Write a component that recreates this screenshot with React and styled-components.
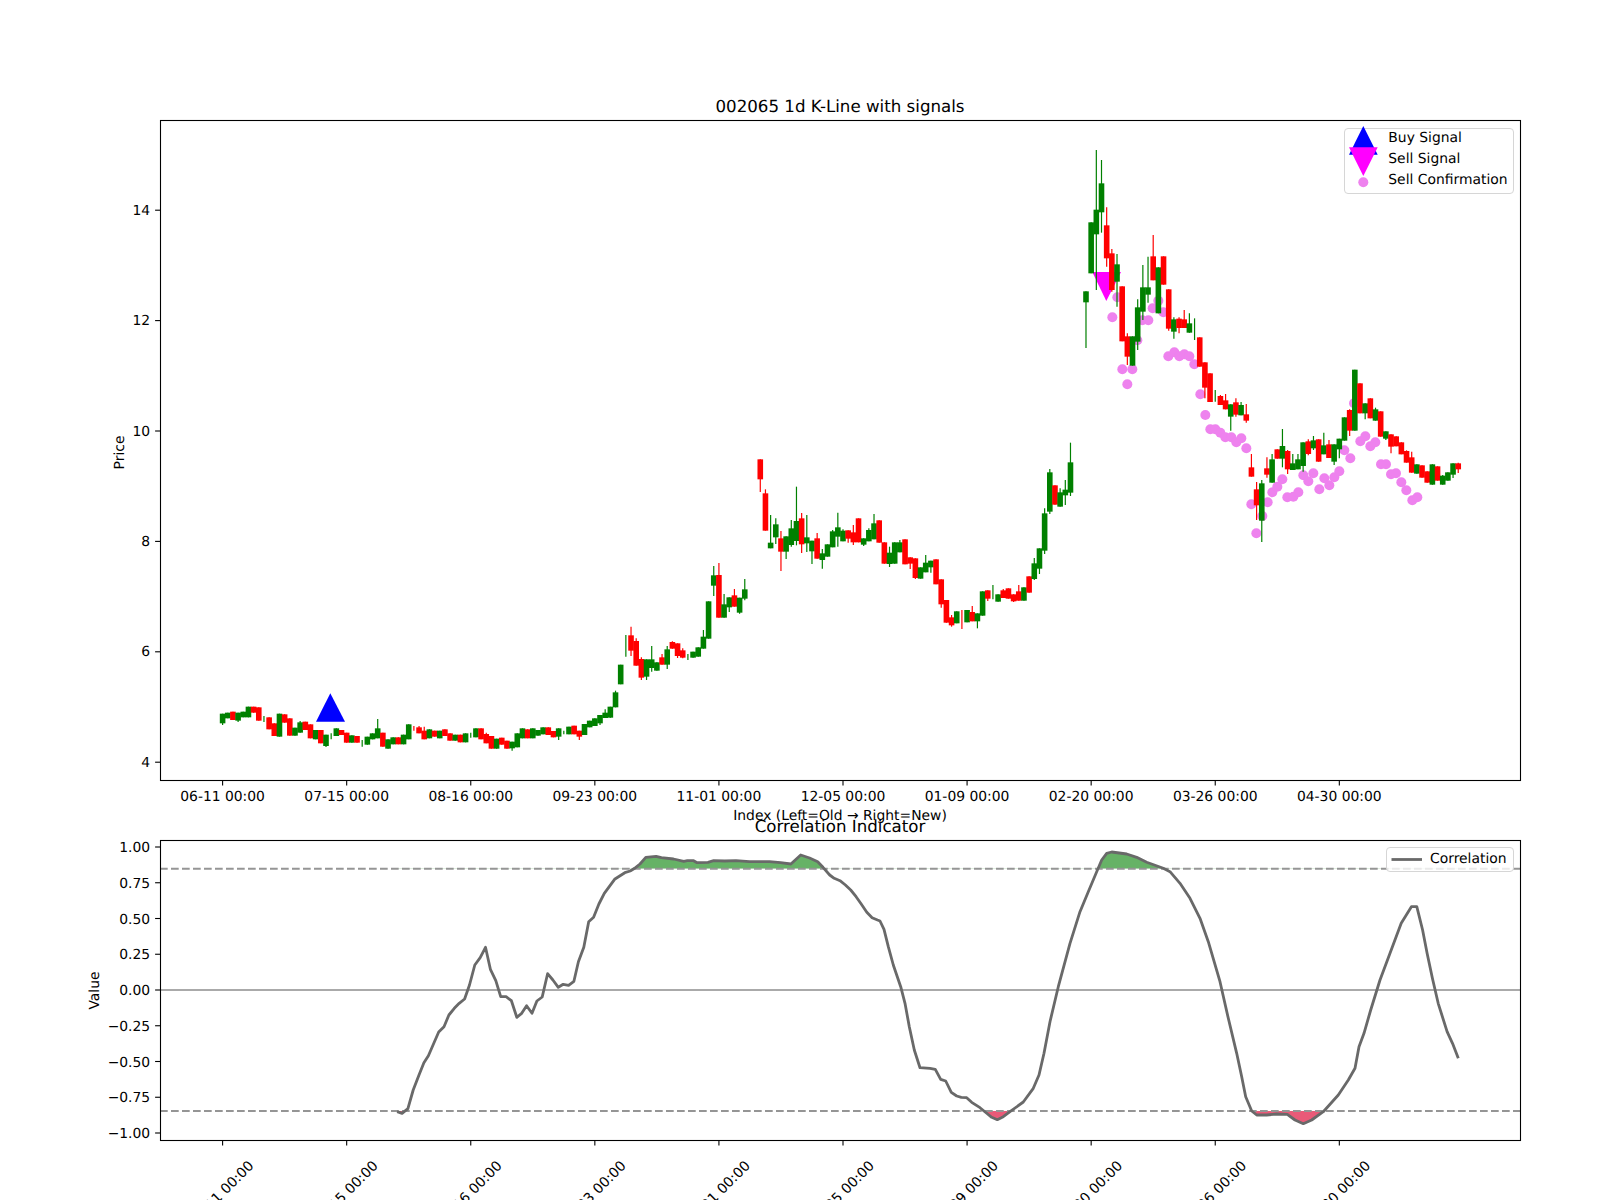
import styled, { createGlobalStyle } from 'styled-components';

const GlobalStyle = createGlobalStyle`
  html, body {
    margin: 0;
    background: #fff;
  }
`;

const Figure = styled.div`
  width: 1600px;
  height: 1200px;
  overflow: hidden;
  background: #fff;
  font-family: "DejaVu Sans", sans-serif;
  font-size: 13.89px;
  color: #000;
  text-rendering: geometricPrecision;
`;

const Panel = styled.section`
  position: relative;
  height: ${props => props.$height}px;
`;

const Plot = styled.svg`
  display: block;
  width: 1600px;
  height: ${props => props.$height}px;
  overflow: visible;

  text {
    font-family: "DejaVu Sans", sans-serif;
    font-size: 13.89px;
    fill: #000;
  }
  text.title {
    font-size: 16.67px;
  }
`;

const Legend = styled.div`
  position: absolute;
  right: 86.3px;
  top: ${props => props.$top}px;
  box-sizing: border-box;
  width: ${props => props.$width}px;
  height: ${props => props.$legendHeight}px;
  padding-left: 4px;
  background: rgba(255, 255, 255, 0.8);
  border: 1px solid #d6d6d6;
  border-radius: 4px;
  display: flex;
  flex-direction: column;
  justify-content: ${props => props.$center ? 'center' : 'flex-start'};
`;

const LegendRow = styled.div`
  display: flex;
  align-items: center;
  gap: 10px;
  height: 21px;
  line-height: 21px;
  white-space: nowrap;

  &:first-child {
    margin-top: -0.5px;
  }
`;

const LegendKey = styled.svg`
  flex: none;
  width: 29px;
  height: 21px;
  overflow: visible;
`;

const BLUE = '#0000ff';
const MAGENTA = '#ff00ff';
const VIOLET = '#ee82ee';
const GREEN = '#008000';
const RED = '#ff0000';

// candles: [colour, body top, body bottom, wick top, wick bottom], traced per chart section
const section1 = [
  ['g',341,370,341,375],['g',338,355],['r',335,360],['g',338,362,338,366],['g',335,352],['g',320,352],['r',320,338],['r',322,362],
  ['g',357,357,348,366],['r',352,388],['r',370,408],['g',341,410],['r',343,368],['r',355,407],['g',383,407],['g',367,398,363,398],
  ['r',365,390],['r',373,415],['g',390,418],['r',390,430],['g',404,438,404,441],['g',409,409,400,418],['g',385,408],['r',390,405],
  ['r',398,428],['g',406,428],['r',408,428],['g',430,430,420,440],['g',410,434],['g',400,418],['g',385,415,357,415],['r',398,440],
  ['g',418,446],['g',412,433],['r',412,433],['g',404,433],['g',373,418],['r',385,385,378,392],['r',382,400,378,400],['r',392,418,380,418],
  ['g',388,415],['r',392,410],['g',392,415],['r',388,408],['r',400,422],['g',404,422],['r',404,427],['g',400,427],
  ['g',405,405,398,413],['g',385,412],['r',385,418],['r',402,430,398,430],['r',408,446],['g',416,446],['r',413,434],['r',422,446],
  ['g',425,445,425,452],['g',400,442],['g',385,415],['r',388,415],['g',385,415],['g',390,407],['g',382,403],['r',382,405],
  ['r',393,412],['g',385,410,385,420],['g',397,397,392,403],['g',380,403],['r',377,403],['r',392,410,392,420],['g',372,405],['g',362,382],
  ['g',355,378],['g',345,370,345,375],['g',338,354,328,354],['g',320,353],['g',277,322,272,322],['g',194,253],
];

const section2 = [
  ['g',617,617,585,650],['r',586,632,560,648],['r',603,677,595,677],['r',657,713,652,720],['g',658,710,658,720],['g',658,684,618,695],['g',667,692],['r',652,674,642,674],
  ['g',628,674,618,687],['r',606,626,604,626],['r',610,648,610,654],['r',631,653,625,655],['g',651,651,642,660],['g',635,653],['g',622,650],['g',590,626,570,626],
  ['g',484,596],['g',406,437,378,468],['r',405,533,369,533],['g',493,533,462,533],['g',472,502,472,516],['r',466,500,447,500],['g',473,518,473,521],['g',448,476,417,481],
  null,null,
  ['r',58,118,58,156],['r',160,272,148,272],['g',308,325,225,325],['g',253,292,235,312],['r',295,335,273,393],['g',289,335,289,357],
  ['g',265,315,240,320],['g',243,303,140,316],['r',235,313,219,339],['g',292,310,225,336],['g',302,334,302,372],['r',295,356,279,356],['g',340,360,327,386],['g',313,350],
  ['g',274,322,270,322],['g',262,290,218,320],['g',272,304,268,304],['r',271,296,271,308],['r',277,307,255,315],['r',235,307],['g',295,314,295,318],['g',270,304,265,304],
  ['g',250,298,222,298],['r',241,308],['r',307,371],['g',338,372,320,381],['g',307,371],['g',307,337,300,337],['r',298,373],['r',352,371,352,387],
  ['r',355,414,355,417],['g',382,416],['g',368,397,345,397],['g',362,382,362,398],['r',358,433],['r',418,493,418,503],['r',480,548],['r',532,556,525,560],
  ['g',514,550],['r',538,538,510,567],['g',510,547],['r',516,544,498,544],['g',520,544,520,565],['g',454,527],['r',451,476,451,483],['g',456,456,435,478],
  ['g',463,485],['r',451,474,447,474],['r',445,476],['r',463,484,463,486],['r',454,482,435,482],['g',442,482],['r',409,458],['g',370,417,354,420],
  ['g',325,386,325,402],['g',220,332,205,342],['g',97,215,87,222],['r',136,194],['g',157,200,145,200],['g',149,166,120,195],['g',67,158,8,168],
  null,null,
];

const section3 = [
  ['g',574,607,574,744],['g',367,520],['g',329,403,150,570],['g',250,337,180,398],['r',376,475,322,500],['r',460,570,447,575],['g',493,545,462,620],['r',559,724],
  ['r',709,770,700,795],['g',709,797],['g',622,725,598,750],['g',562,635,495,660],['g',562,584,470,608],['r',469,541,405,541],['g',502,640],['r',469,554],
  ['r',568,686,568,692],['g',658,695,652,716],['r',656,684,652,700],['r',658,684,630,684],['g',670,698,640,698],['g',690,690,655,720],['r',712,800],['r',787,863,787,895],
  ['r',820,906],['g',888,888,870,905],['r',888,915,885,915],['r',901,928,882,928],
];

const section4 = [
  ['g',73,110,73,152],['r',67,104,55,110],['g',75,106,66,106],['r',103,122,72,128],['r',262,290,222,290],['r',328,376,306,420],['g',310,422,300,486],['r',265,284,232,293],
  ['g',238,308,222,308],['r',208,236],['g',198,236,147,262],['r',213,268,210,282],['g',250,270,222,270],['g',238,268,222,268],['g',187,258,187,275],['r',184,222,178,226],
  ['g',181,205,168,210],['r',178,245],['g',196,223,158,223],['r',193,234,180,234],['g',193,245,193,255],['g',176,208,176,235],['g',112,182],['r',90,152,88,168],
  ['g',-31,152],['r',10,100],['g',70,100,70,118],['r',55,115],['g',88,122,83,122],['r',94,170],['g',154,176,154,180],['r',163,200,163,220],
  ['r',169,199],['r',187,223],['r',213,248,211,248],['r',232,278,215,278],['g',253,281],['r',256,293],['r',274,308],['g',253,314],
  ['r',259,302],['g',287,314,285,314],['g',277,302],['g',250,284,250,294],['r',250,268,248,279],
];

const toPage = (rows, top) => rows.map(row => {
  if (!row) return null;
  const [dir, open, close, high = open, low = close] = row;
  return {
    color: dir === 'g' ? GREEN : RED,
    top: top + open / 3,
    bottom: top + close / 3,
    high: top + high / 3,
    low: top + low / 3,
  };
});

const candles = [
  ...toPage(section1, 600),
  ...toPage(section2, 440),
  ...toPage(section3, 100),
  ...toPage(section4, 380),
];

const barX = i => 222.6 + 5.17 * i;

const confirmationsUpper = [
  [172,592],[157,652],[187,808],[202,853],[217,808],[232,721],[247,661],[265,661],[278,625],[295,602],[310,637],
  [325,769],[343,757],[358,769],[373,763],[388,769],[403,793],[421,883],[436,945],[882,910],
];
const confirmationsLower = [
  [331,148],[346,148],[361,158],[376,172],[394,172],[409,187],[424,175],[439,205],[454,373],[469,460],[487,408],
  [503,367],[517,337],[532,320],[547,298],[562,352],[580,350],[595,337],[610,286],[625,304],[640,280],[658,328],
  [673,295],[688,316],[703,292],[718,274],[733,211],[751,235],[781,184],[796,169],[811,199],[826,187],[843,253],
  [858,253],[873,283],[888,280],[904,307],[919,331],[937,361],[952,352],
];
const confirmations = [
  ...confirmationsUpper.map(([x, y]) => [1060 + x / 3, 100 + y / 3]),
  ...confirmationsLower.map(([x, y]) => [1100 + x / 3, 380 + y / 3]),
];

const corrRise = [
  [576,845],[587,850],[600,836],[612,780],[625,735],[636,698],[646,677],[658,640],[669,606],[681,590],[692,555],[704,535],
  [715,520],[727,507],[738,465],[750,405],[762,383],[774,352],[785,418],[797,452],[808,500],[820,500],[832,512],[844,562],
  [855,550],[866,527],[878,550],[889,513],[901,501],[913,431],[925,450],[937,472],[948,463],[960,466],[972,454],[982,395],
  [994,352],[1005,275],[1016,262],[1028,222],[1040,190],[1063,148],[1086,128],[1098,123],[1110,113],[1120,102],[1133,82],
  [1156,79],[1168,83],[1195,87],[1218,94],[1226,92],[1240,92],[1248,98],[1272,97],[1285,92],[1310,93],[1335,92],[1365,95],
  [1410,95],[1435,98],[1458,102],[1480,75],[1500,84],[1518,95],[1530,112],[1545,135],[1555,145],[1568,152],
];
const corrFall = [[12,165],[24,180],[36,200],[48,223],[60,247],[72,263],[84,270]];
const corrSwing = [
  [0,243],[12,268],[25,320],[40,375],[62,440],[75,490],[88,560],[103,630],[120,683],[150,685],[166,688],[182,718],[197,723],
  [214,757],[230,768],[244,772],[260,773],[275,787],[300,803],[320,820],[335,832],[352,839],[370,830],[390,815],[430,786],
  [460,745],[477,705],[492,640],[510,545],[535,440],[570,310],[600,215],[625,155],[650,95],[665,60],[680,40],[695,36],
  [740,42],[770,52],[800,67],[850,85],[870,95],[900,130],[930,175],[960,235],[985,305],[1020,425],[1045,535],[1070,640],
  [1085,710],[1097,770],[1115,813],[1130,825],[1160,825],[1190,822],[1222,823],[1245,840],[1270,851],[1295,840],[1330,815],
  [1375,765],[1405,720],[1425,685],[1437,620],[1452,580],[1472,510],[1500,420],
];
const corrTail = [
  [1232,370],[1257,280],[1280,230],[1292,230],[1305,300],[1315,370],[1327,445],[1340,520],[1360,605],[1372,640],[1385,685],
];
const correlation = [
  ...corrRise.map(([x, y]) => [140 + x / 2.24, 830 + y / 3]),
  ...corrFall.map(([x, y]) => [840 + x / 2.24, 830 + y / 3]),
  ...corrSwing.map(([x, y]) => [880 + x / 3, 840 + y / 3]),
  ...corrTail.map(([x, y]) => [840 + x / 2.24, 830 + y / 3]),
];
const curve = correlation.map(([x, y]) => `${x.toFixed(1)},${y.toFixed(1)}`).join(' ');
const curveStart = correlation[0][0].toFixed(1);
const curveEnd = correlation[correlation.length - 1][0].toFixed(1);

const upperY = 868.8;
const lowerY = 1111;

const xTicks = ['06-11', '07-15', '08-16', '09-23', '11-01', '12-05', '01-09', '02-20', '03-26', '04-30']
  .map((day, i) => ({ label: `${day} 00:00`, x: barX(i * 24) }));
const priceTicks = [4, 6, 8, 10, 12, 14].map(p => ({ label: String(p), y: 762.2 - 55.2 * (p - 4) }));
const valueTicks = [1, 0.75, 0.5, 0.25, 0, -0.25, -0.5, -0.75, -1].map(v => ({
  label: (v < 0 ? '\u2212' : '') + Math.abs(v).toFixed(2),
  y: 990 - 143 * v,
}));

const YTicks = ({ ticks, shift }) => ticks.map(t => (
  <g key={t.label}>
    <line x1="155.1" x2="160" y1={t.y} y2={t.y} stroke="#000" strokeWidth="1.1" />
    <text x="150.2" y={t.y + shift} textAnchor="end">{t.label}</text>
  </g>
));

const Candle = ({ c, x }) => (
  <g fill={c.color} stroke={c.color}>
    <line x1={x} x2={x} y1={c.high} y2={c.low} strokeWidth="1.2" />
    <rect x={x - 2.8} y={c.top} width="5.6" height={c.bottom - c.top} stroke="none" />
  </g>
);

const PriceChart = () => (
  <Plot $height={822} viewBox="0 0 1600 822">
    <text className="title" x="840" y="112" textAnchor="middle">002065 1d K-Line with signals</text>
    <polygon points="330.3,693.3 345,721.7 316,721.7" fill={BLUE} />
    <polygon points="1092.3,272 1121,272 1106.3,301" fill={MAGENTA} />
    {confirmations.map(([x, y], i) => <circle key={i} cx={x} cy={y} r="5" fill={VIOLET} />)}
    {candles.map((c, i) => c && <Candle key={i} c={c} x={barX(i)} />)}
    <rect x="160.5" y="120.5" width="1360" height="660" fill="none" stroke="#000" strokeWidth="1.1" />
    {xTicks.map(t => (
      <g key={t.label}>
        <line x1={t.x} x2={t.x} y1="781" y2="785.5" stroke="#000" strokeWidth="1.1" />
        <text x={t.x} y="801" textAnchor="middle">{t.label}</text>
      </g>
    ))}
    <YTicks ticks={priceTicks} shift={4.6} />
    <text x="840" y="820" textAnchor="middle">Index (Left=Old → Right=New)</text>
    <text transform="translate(124 452.5) rotate(-90)" textAnchor="middle">Price</text>
  </Plot>
);

const CorrelationChart = () => (
  <Plot $height={378} viewBox="0 822 1600 378">
    <defs>
      <clipPath id="aboveUpper"><rect x="160" y="840" width="1360" height={upperY - 840} /></clipPath>
      <clipPath id="belowLower"><rect x="160" y={lowerY} width="1360" height={1140 - lowerY} /></clipPath>
    </defs>
    <text className="title" x="840" y="831.7" textAnchor="middle">Correlation Indicator</text>
    <path d={`M${curve} L${curveEnd},${upperY} L${curveStart},${upperY} Z`} fill="#66b266" clipPath="url(#aboveUpper)" />
    <path d={`M${curve} L${curveEnd},${lowerY} L${curveStart},${lowerY} Z`} fill="#e95a78" clipPath="url(#belowLower)" />
    <line x1="160" x2="1520" y1="990" y2="990" stroke="#aaa" strokeWidth="2" />
    <line x1="160" x2="1520" y1={upperY} y2={upperY} stroke="#959595" strokeWidth="2" strokeDasharray="7.7 3.3" />
    <line x1="160" x2="1520" y1={lowerY} y2={lowerY} stroke="#959595" strokeWidth="2" strokeDasharray="7.7 3.3" />
    <polyline points={curve} fill="none" stroke="#696969" strokeWidth="2.8" strokeLinejoin="round" />
    <rect x="160.5" y="840.5" width="1360" height="300" fill="none" stroke="#000" strokeWidth="1.1" />
    {xTicks.map(t => (
      <g key={t.label}>
        <line x1={t.x} x2={t.x} y1="1141" y2="1145.5" stroke="#000" strokeWidth="1.1" />
        <text transform={`translate(${t.x - 1.5} 1193) rotate(-45)`} y="5" textAnchor="middle">{t.label}</text>
      </g>
    ))}
    <YTicks ticks={valueTicks} shift={5.2} />
    <text transform="translate(99 990.5) rotate(-90)" textAnchor="middle">Value</text>
  </Plot>
);

const SignalLegend = () => (
  <Legend $top={127.7} $width={169.4} $legendHeight={66.6}>
    <LegendRow>
      <LegendKey><polygon points="14.3,-2 28.7,26.7 0,26.7" fill={BLUE} /></LegendKey>
      Buy Signal
    </LegendRow>
    <LegendRow>
      <LegendKey><polygon points="0,-1.7 28.7,-1.7 14.3,27" fill={MAGENTA} /></LegendKey>
      Sell Signal
    </LegendRow>
    <LegendRow>
      <LegendKey><circle cx="14.3" cy="12.3" r="5" fill={VIOLET} /></LegendKey>
      Sell Confirmation
    </LegendRow>
  </Legend>
);

const CorrelationLegend = () => (
  <Legend $top={25.3} $width={127.7} $legendHeight={25.2} $center>
    <LegendRow>
      <LegendKey><line x1="0.5" x2="31" y1="10.5" y2="10.5" stroke="#696969" strokeWidth="2.8" /></LegendKey>
      Correlation
    </LegendRow>
  </Legend>
);

export default function App() {
  return (
    <Figure>
      <GlobalStyle />
      <Panel $height={822}>
        <PriceChart />
        <SignalLegend />
      </Panel>
      <Panel $height={378}>
        <CorrelationChart />
        <CorrelationLegend />
      </Panel>
    </Figure>
  );
}
